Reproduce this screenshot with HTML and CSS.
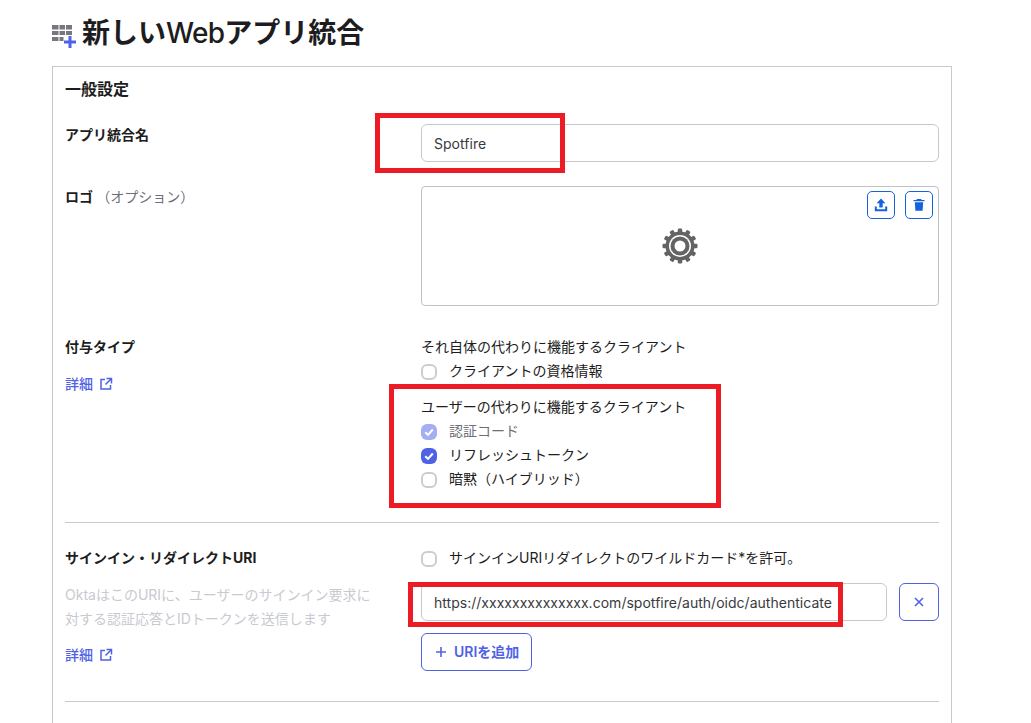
FILE: index.html
```html
<!DOCTYPE html>
<html lang="ja">
<head>
<meta charset="utf-8">
<title>新しいWebアプリ統合</title>
<link rel="stylesheet" href="styles.css">
</head>
<body>
<div class="page">
  <header class="head">
    <svg class="head-icon" width="26" height="26" viewBox="0 0 26 26">
      <g fill="#77777f">
        <rect x="0" y="2" width="6.500" height="4.500"/><rect x="7.500" y="2" width="5.500" height="4.500"/><rect x="14" y="2" width="6" height="4.500"/>
        <rect x="0" y="8" width="6.500" height="4"/><rect x="7.500" y="8" width="5.500" height="4"/><rect x="14" y="8" width="6" height="4"/>
        <rect x="0" y="14" width="6.500" height="4"/><rect x="7.500" y="14" width="4" height="4"/>
      </g>
      <path d="M18 13v12M12 19h12" stroke="#4f62e6" stroke-width="3" fill="none"/>
    </svg>
    <h1 class="title">新しい<span class="title-latin">Web</span>アプリ統合</h1>
  </header>

  <main class="card">
    <h2 class="section-title">一般設定</h2>

    <div class="row first">
      <div class="label-col"><div class="label">アプリ統合名</div></div>
      <div class="field-col"><div class="input">Spotfire</div></div>
    </div>

    <div class="row gap">
      <div class="label-col"><div class="label">ロゴ <span class="optional">（オプション）</span></div></div>
      <div class="field-col">
        <div class="logo-box">
          <div class="logo-actions">
            <span class="icon-btn">
              <svg width="16" height="16" viewBox="0 0 16 16"><path d="M8 1.500 3.600 6.200h2.700v4.300h3.400V6.200h2.700z" fill="#1662dd"/><path d="M1.800 9.500v4.700h12.400V9.500h-2v2.700H3.800V9.500z" fill="#1662dd"/></svg>
            </span>
            <span class="icon-btn">
              <svg width="16" height="16" viewBox="0 0 16 16"><path d="M6 2h4l.6 1H13.500v1.300h-11V3h2.900z" fill="#1662dd"/><path d="M3.800 5.200h8.400l-.6 8.600H4.400z" fill="#1662dd"/></svg>
            </span>
          </div>
          <svg class="gear" width="38" height="38" viewBox="0 0 38 38">
            <g fill="#636363">
              <circle cx="19" cy="19" r="14.500"/>
              <rect x="16.800" y="1.500" width="4.400" height="6" rx="1.200"/>
              <rect x="16.800" y="1.500" width="4.400" height="6" rx="1.200" transform="rotate(30 19 19)"/>
              <rect x="16.800" y="1.500" width="4.400" height="6" rx="1.200" transform="rotate(60 19 19)"/>
              <rect x="16.800" y="1.500" width="4.400" height="6" rx="1.200" transform="rotate(90 19 19)"/>
              <rect x="16.800" y="1.500" width="4.400" height="6" rx="1.200" transform="rotate(120 19 19)"/>
              <rect x="16.800" y="1.500" width="4.400" height="6" rx="1.200" transform="rotate(150 19 19)"/>
              <rect x="16.800" y="1.500" width="4.400" height="6" rx="1.200" transform="rotate(180 19 19)"/>
              <rect x="16.800" y="1.500" width="4.400" height="6" rx="1.200" transform="rotate(210 19 19)"/>
              <rect x="16.800" y="1.500" width="4.400" height="6" rx="1.200" transform="rotate(240 19 19)"/>
              <rect x="16.800" y="1.500" width="4.400" height="6" rx="1.200" transform="rotate(270 19 19)"/>
              <rect x="16.800" y="1.500" width="4.400" height="6" rx="1.200" transform="rotate(300 19 19)"/>
              <rect x="16.800" y="1.500" width="4.400" height="6" rx="1.200" transform="rotate(330 19 19)"/>
            </g>
            <circle cx="19" cy="19" r="11" fill="#fff"/>
            <circle cx="19" cy="19" r="9.500" fill="#636363"/>
            <circle cx="19" cy="19" r="5.500" fill="#fff"/>
          </svg>
        </div>
      </div>
    </div>

    <div class="row grant">
      <div class="label-col">
        <div class="label">付与タイプ</div>
        <a class="more more-grant">詳細<svg class="ext" width="14" height="14" viewBox="0 0 14 14"><path d="M6 2.500H2v9.500h9.500V8" fill="none" stroke="#4f62e6" stroke-width="1.500"/><path d="M7.500 1.500h5v5M12.300 1.700 6.500 7.500" fill="none" stroke="#4f62e6" stroke-width="1.500"/></svg></a>
      </div>
      <div class="field-col">
        <div class="group-title">それ自体の代わりに機能するクライアント</div>
        <label class="check"><span class="box"></span><span class="check-text">クライアントの資格情報</span></label>
        <div class="group-title group-next">ユーザーの代わりに機能するクライアント</div>
        <label class="check muted"><span class="box on soft"><svg width="16" height="16" viewBox="0 0 16 16"><path d="M4.200 8.300 7 10.800l4.800-5.300" fill="none" stroke="#fff" stroke-width="2"/></svg></span><span class="check-text">認証コード</span></label>
        <label class="check"><span class="box on"><svg width="16" height="16" viewBox="0 0 16 16"><path d="M4.200 8.300 7 10.800l4.800-5.300" fill="none" stroke="#fff" stroke-width="2"/></svg></span><span class="check-text">リフレッシュトークン</span></label>
        <label class="check"><span class="box"></span><span class="check-text">暗黙（ハイブリッド）</span></label>
      </div>
    </div>

    <hr class="rule">

    <div class="row">
      <div class="label-col">
        <div class="label">サインイン・リダイレクトURI</div>
        <p class="hint">OktaはこのURIに、ユーザーのサインイン要求に対する認証応答とIDトークンを送信します</p>
        <a class="more more-uri">詳細<svg class="ext" width="14" height="14" viewBox="0 0 14 14"><path d="M6 2.500H2v9.500h9.500V8" fill="none" stroke="#4f62e6" stroke-width="1.500"/><path d="M7.500 1.500h5v5M12.300 1.700 6.500 7.500" fill="none" stroke="#4f62e6" stroke-width="1.500"/></svg></a>
      </div>
      <div class="field-col">
        <label class="check"><span class="box"></span><span class="check-text">サインインURIリダイレクトのワイルドカード*を許可。</span></label>
        <div class="uri-row">
          <div class="input uri-input">https://xxxxxxxxxxxxxx.com/spotfire/auth/oidc/authenticate</div>
          <span class="remove"><svg width="10" height="10" viewBox="0 0 10 10"><path d="M1 1l8 8M9 1 1 9" stroke="#4f62e6" stroke-width="1.600" fill="none"/></svg></span>
        </div>
        <span class="add"><svg width="12" height="12" viewBox="0 0 12 12"><path d="M6 1v10M1 6h10" stroke="#4f62e6" stroke-width="1.600" fill="none"/></svg>URIを追加</span>
      </div>
    </div>

    <hr class="rule rule-last">
  </main>

  <div class="mark mark-name"></div>
  <div class="mark mark-grant"></div>
  <div class="mark mark-uri"></div>
</div>
</body>
</html>
```

FILE: styles.css
```css
* { box-sizing: border-box; }
html, body { margin: 0; padding: 0; background: #fff; }
body {
  font-family: Inter, "Noto Sans CJK JP", sans-serif;
  font-size: 14px;
  line-height: 24px;
  color: #1d1d21;
  overflow: hidden;
}
.page {
  position: relative;
  width: 1031px;
  height: 723px;
  overflow: hidden;
  padding-left: 52px;
}
.head {
  height: 66px;
  display: flex;
  align-items: flex-start;
  gap: 4px;
  padding-top: 14px;
}
.head-icon { margin-top: 9px; flex: none; }
.title {
  margin: 0;
  font-size: 28px;
  line-height: 38px;
  font-weight: 700;
  color: #1d1d21;
}
.title-latin { font-weight: 500; letter-spacing: -0.7px; }
.card {
  width: 900px;
  height: 700px;
  border: 1px solid #c9c9cc;
  padding: 11px 12px;
}
.section-title {
  margin: 0;
  height: 24px;
  font-size: 16px;
  line-height: 22px;
  font-weight: 700;
}
.row { display: flex; }
.row.first { margin-top: 22px; }
.row.gap { margin-top: 24px; }
.row.grant { margin-top: 30px; }
.label-col { width: 356px; flex: none; }
.field-col { flex: 1; min-width: 0; }
.label { font-weight: 700; font-size: 14px; height: 24px; line-height: 22px; }
.optional { font-weight: 400; color: #6e6e78; }
.input {
  height: 38px;
  border: 1px solid #c9c9cc;
  border-radius: 6px;
  padding: 0 12px;
  line-height: 38px;
  color: #3a3a40;
  background: #fff;
  letter-spacing: 0.02px;
}
.logo-box {
  position: relative;
  height: 120px;
  border: 1px solid #c1c1c8;
  border-radius: 4px;
  display: flex;
  align-items: center;
  justify-content: center;
}
.logo-actions {
  position: absolute;
  top: 4px;
  right: 5px;
  display: flex;
  gap: 10px;
}
.icon-btn {
  width: 28px;
  height: 28px;
  border: 1px solid #1662dd;
  border-radius: 5px;
  display: flex;
  align-items: center;
  justify-content: center;
}
.more {
  display: flex;
  align-items: center;
  gap: 6px;
  color: #4f62e6;
  font-weight: 500;
}
.more-grant { margin-top: 12px; }
.more-uri { margin-top: 12px; }
.group-title { height: 24px; line-height: 22px; }
.group-next { margin-top: 12px; }
.check { display: flex; align-items: center; gap: 12px; height: 24px; }
.check-text { line-height: 22px; padding-bottom: 2px; }
.check.muted { color: #6e6e78; }
.box {
  width: 16px;
  height: 16px;
  flex: none;
  border: 2px solid #cdcdd0;
  border-radius: 6px;
  background: #fff;
  display: block;
}
.box.on { background: #4f62e6; border: 0; }
.box.on.soft { background: #a4aef2; }
.box svg { display: block; }
.rule { margin: 0; border: 0; border-top: 1px solid #c9c9cc; }
.grant + .rule { margin-top: 30px; margin-bottom: 24px; }
.rule-last { margin-top: 30px; }
.hint {
  margin: 12px 0 0;
  color: #c9cad0;
  width: 310px;
  line-height: 24px;
}
.uri-row { display: flex; gap: 12px; margin-top: 12px; }
.uri-input { flex: 1; min-width: 0; }
.remove {
  width: 40px;
  height: 38px;
  flex: none;
  border: 1px solid #4f62e6;
  border-radius: 6px;
  display: flex;
  align-items: center;
  justify-content: center;
}
.add {
  display: inline-flex;
  align-items: center;
  gap: 7px;
  height: 38px;
  margin-top: 12px;
  padding: 0 12px 0 13px;
  border: 1px solid #4f62e6;
  border-radius: 6px;
  color: #4f62e6;
  font-weight: 600;
}
.mark {
  position: absolute;
  border: 5px solid #ed1c24;
}
.mark-name { left: 375px; top: 113px; width: 190px; height: 60px; }
.mark-grant { left: 389px; top: 384px; width: 332px; height: 124px; }
.mark-uri { left: 408px; top: 582px; width: 435px; height: 45px; }
```
